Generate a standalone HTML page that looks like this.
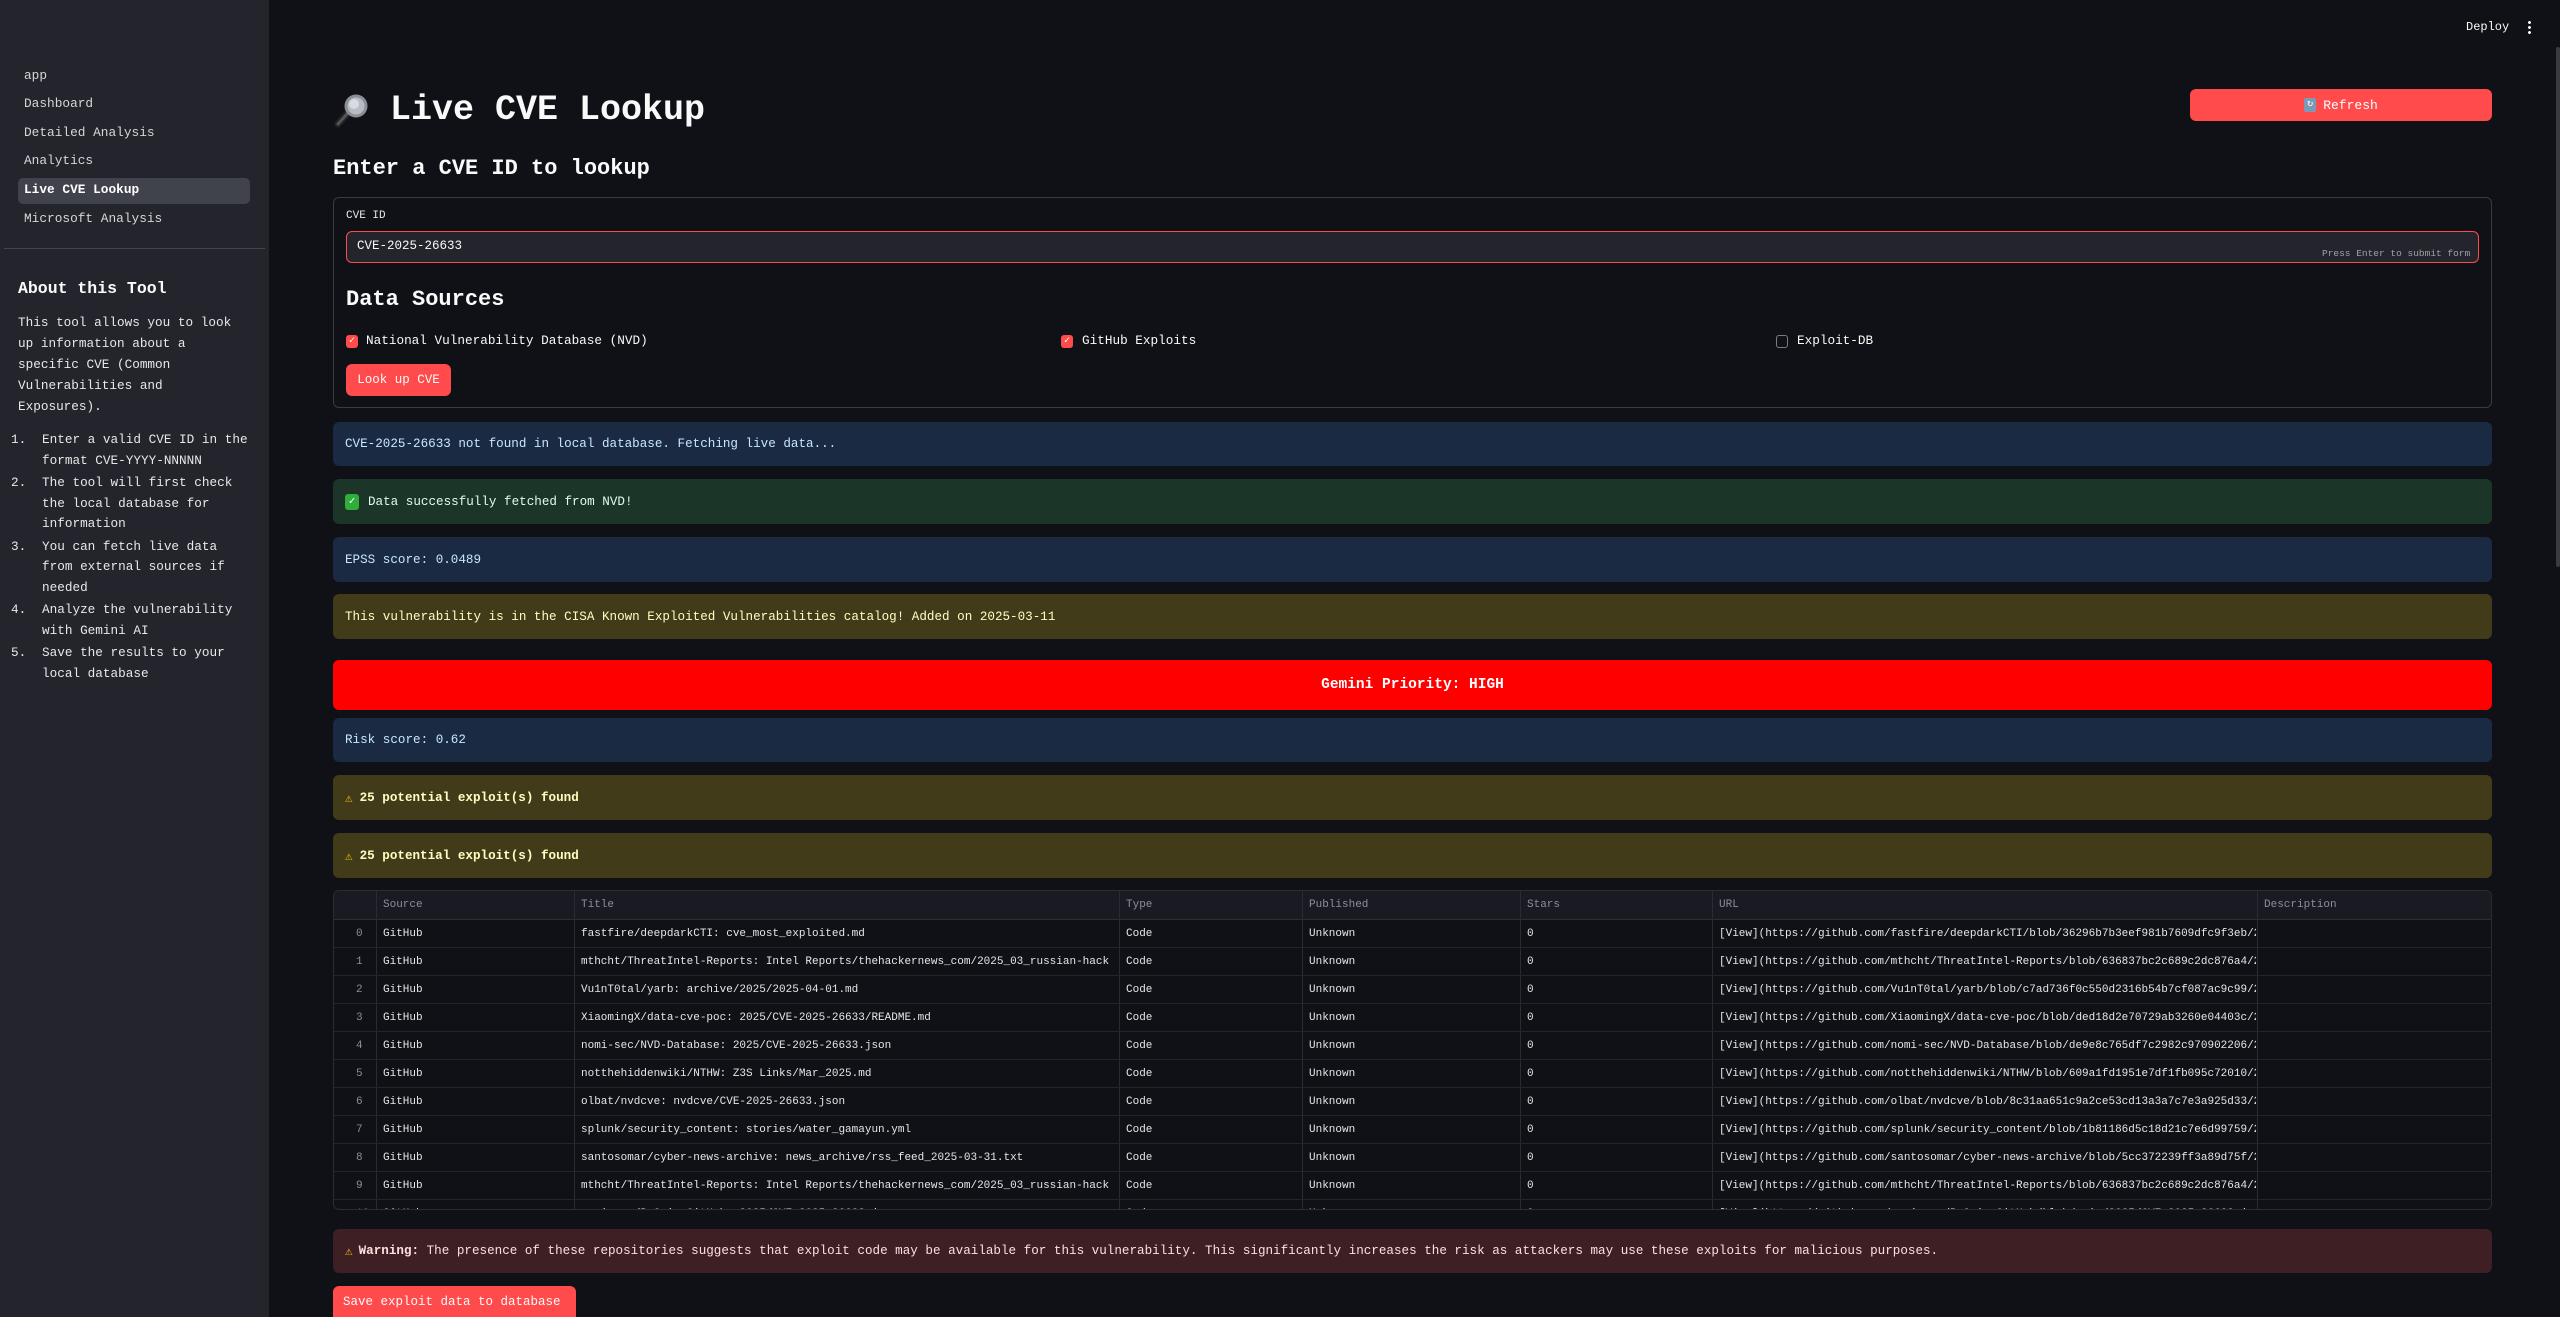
<!DOCTYPE html>
<html><head><meta charset="utf-8"><style>
*{box-sizing:border-box;margin:0;padding:0}
html,body{width:2560px;height:1317px;overflow:hidden}
body{background:#0f1116;font-family:"Liberation Mono","DejaVu Sans Mono",monospace;color:#fafafa;position:relative}
.a{position:absolute;white-space:nowrap}
#sb{position:absolute;left:0;top:0;width:269px;height:1317px;background:#23242c}
.nav{position:absolute;left:24px;font-size:12.8px;color:#d5d6da;line-height:20px}
.box{position:absolute;left:333px;width:2159px;border-radius:6px;font-size:12.6px;padding-left:12px;display:flex;align-items:center}
.blue{background:#1a2a42;color:#c7e7ff}
.green{background:#1b3628;color:#dffde9}
.yel{background:#423b19;color:#ffffc2}
.th,.td{position:absolute;font-size:11px;white-space:nowrap;overflow:hidden}
.th{color:#8d8f98}
.td{color:#e6e6e6}
.cb{position:absolute;width:12px;height:13px;border-radius:3px}
.li{position:relative;padding-left:31px;margin-bottom:2px}
.li span{position:absolute;left:0;top:0}
</style></head><body>
<div id="sb"></div>
<div class="nav" style="top:66px">app</div>
<div class="nav" style="top:94px">Dashboard</div>
<div class="nav" style="top:123px">Detailed Analysis</div>
<div class="nav" style="top:151px">Analytics</div>
<div class="a" style="left:18px;top:178px;width:232px;height:26px;background:#41434c;border-radius:5px"></div>
<div class="nav" style="top:180px;color:#fff;font-weight:bold">Live CVE Lookup</div>
<div class="nav" style="top:209px">Microsoft Analysis</div>
<div class="a" style="left:4px;top:248px;width:261px;height:1px;background:#44454c"></div>
<div class="a" style="left:18px;top:279px;font-size:16.5px;font-weight:bold;color:#fafafa">About this Tool</div>
<div class="a" style="left:18px;top:312px;font-size:12.7px;line-height:21px;color:#e8e8ea;white-space:normal;width:240px">This tool allows you to look<br>up information about a<br>specific CVE (Common<br>Vulnerabilities and<br>Exposures).</div>
<div class="a" style="left:11px;top:430px;font-size:12.7px;color:#e8e8ea;line-height:20.5px">
<div class="li"><span>1.</span>Enter a valid CVE ID in the<br>format CVE-YYYY-NNNNN</div>
<div class="li"><span>2.</span>The tool will first check<br>the local database for<br>information</div>
<div class="li"><span>3.</span>You can fetch live data<br>from external sources if<br>needed</div>
<div class="li"><span>4.</span>Analyze the vulnerability<br>with Gemini AI</div>
<div class="li"><span>5.</span>Save the results to your<br>local database</div>
</div>
<!-- top bar -->
<div class="a" style="left:2466px;top:20px;font-size:12px;color:#fafafa">Deploy</div>
<div class="a" style="left:2528px;top:20px;width:3px;height:14px;background:radial-gradient(circle,#fff 1.3px,transparent 1.6px) 0 0/3px 5px"></div>
<div class="a" style="left:2556px;top:47px;width:4px;height:520px;background:#3a3b40;border-radius:2px"></div>
<!-- title -->
<svg class="a" style="left:332px;top:93px" width="38" height="36" viewBox="0 0 38 36"><line x1="6" y1="31" x2="15" y2="21" stroke="#222" stroke-width="7" stroke-linecap="round"/><line x1="6" y1="31" x2="15" y2="21" stroke="#555" stroke-width="3" stroke-linecap="round"/><circle cx="24" cy="13" r="10" fill="#b8bcc2" stroke="#8a8f97" stroke-width="3"/><circle cx="22" cy="11" r="5" fill="#d8dbe0"/></svg>
<div class="a" style="left:390px;top:90px;font-size:35px;font-weight:bold;color:#fafafa">Live CVE Lookup</div>
<div class="a" style="left:2190px;top:89px;width:302px;height:32px;background:#ff4b4b;border-radius:6px;display:flex;align-items:center;justify-content:center;font-size:13px;color:#fff"><span style="display:inline-block;width:12px;height:14px;background:#7a9ab8;border-radius:2px;margin-right:7px;color:#fff;font-size:10px;line-height:14px;text-align:center">↻</span>Refresh</div>
<div class="a" style="left:333px;top:156px;font-size:22px;font-weight:bold">Enter a CVE ID to lookup</div>
<!-- form -->
<div class="a" style="left:333px;top:197px;width:2159px;height:211px;border:1px solid #3a3b42;border-radius:6px"></div>
<div class="a" style="left:346px;top:210px;font-size:11px;color:#e8e8ea">CVE ID</div>
<div class="a" style="left:346px;top:231px;width:2133px;height:32px;background:#23242c;border:1px solid #ff4b4b;border-radius:6px"></div>
<div class="a" style="left:357px;top:239px;font-size:12.5px;color:#fafafa">CVE-2025-26633</div>
<div class="a" style="left:2322px;top:248px;font-size:9.5px;color:#a0a2a8">Press Enter to submit form</div>
<div class="a" style="left:346px;top:287px;font-size:22px;font-weight:bold">Data Sources</div>
<div class="cb" style="left:346px;top:335px;background:#ff4b4b;color:#fff;font-size:10px;line-height:13px;text-align:center">✓</div>
<div class="a" style="left:366px;top:333px;font-size:12.7px">National Vulnerability Database (NVD)</div>
<div class="cb" style="left:1061px;top:335px;background:#ff4b4b;color:#fff;font-size:10px;line-height:13px;text-align:center">✓</div>
<div class="a" style="left:1082px;top:333px;font-size:12.7px">GitHub Exploits</div>
<div class="cb" style="left:1776px;top:335px;border:1px solid #7a7b82"></div>
<div class="a" style="left:1797px;top:333px;font-size:12.7px">Exploit-DB</div>
<div class="a" style="left:346px;top:364px;width:105px;height:32px;background:#ff4b4b;border-radius:6px;font-size:12.5px;display:flex;align-items:center;justify-content:center">Look up CVE</div>
<!-- alerts -->
<div class="box blue" style="top:422px;height:44px">CVE-2025-26633 not found in local database. Fetching live data...</div>
<div class="box green" style="top:479px;height:45px"><span style="display:inline-block;width:14px;height:16px;background:#2fae3c;border-radius:3px;color:#fff;font-size:11px;line-height:16px;text-align:center;margin-right:9px">✓</span>Data successfully fetched from NVD!</div>
<div class="box blue" style="top:537px;height:45px">EPSS score: 0.0489</div>
<div class="box yel" style="top:594px;height:45px">This vulnerability is in the CISA Known Exploited Vulnerabilities catalog! Added on 2025-03-11</div>
<div class="box" style="top:660px;height:50px;background:#ff0000;justify-content:center;padding:0;font-weight:bold;font-size:14.5px;color:#fff">Gemini Priority: HIGH</div>
<div class="box blue" style="top:718px;height:44px">Risk score: 0.62</div>
<div class="box yel" style="top:775px;height:45px;font-weight:bold"><span style="color:#f5c518;margin-right:7px">⚠</span>25 potential exploit(s) found</div>
<div class="box yel" style="top:833px;height:45px;font-weight:bold"><span style="color:#f5c518;margin-right:7px">⚠</span>25 potential exploit(s) found</div>
<!-- table -->
<div class="a" style="left:333px;top:890px;width:2159px;height:320px;border:1px solid #2a2b33;border-radius:6px;overflow:hidden">
<div class="a" style="left:0;top:0;width:2159px;height:29px;background:#1a1b22;border-bottom:1px solid #2d2e36"></div>
<div id="rows"></div>
</div>
<div class="box" style="top:1229px;height:44px;background:#3e2024;color:#ffdede"><span style="color:#f5c518;margin-right:6px">⚠</span><b>Warning:</b>&nbsp;The presence of these repositories suggests that exploit code may be available for this vulnerability. This significantly increases the risk as attackers may use these exploits for malicious purposes.</div>
<div class="a" style="left:333px;top:1286px;width:243px;height:40px;background:#ff4b4b;border-radius:6px;font-size:12.5px;padding:9px 0 0 10px">Save exploit data to database</div>
<script>
var cols=[333,375,573,1118,1301,1519,1711,2256];
var h=['','Source','Title','Type','Published','Stars','URL','Description'];
var T=["fastfire/deepdarkCTI: cve_most_exploited.md","mthcht/ThreatIntel-Reports: Intel Reports/thehackernews_com/2025_03_russian-hack","Vu1nT0tal/yarb: archive/2025/2025-04-01.md","XiaomingX/data-cve-poc: 2025/CVE-2025-26633/README.md","nomi-sec/NVD-Database: 2025/CVE-2025-26633.json","notthehiddenwiki/NTHW: Z3S Links/Mar_2025.md","olbat/nvdcve: nvdcve/CVE-2025-26633.json","splunk/security_content: stories/water_gamayun.yml","santosomar/cyber-news-archive: news_archive/rss_feed_2025-03-31.txt","mthcht/ThreatIntel-Reports: Intel Reports/thehackernews_com/2025_03_russian-hack","nomi-sec/PoC-in-GitHub: 2025/CVE-2025-26633.json"];
var U=["fastfire/deepdarkCTI/blob/36296b7b3eef981b7609dfc9f3eb","mthcht/ThreatIntel-Reports/blob/636837bc2c689c2dc876a4","Vu1nT0tal/yarb/blob/c7ad736f0c550d2316b54b7cf087ac9c99","XiaomingX/data-cve-poc/blob/ded18d2e70729ab3260e04403c","nomi-sec/NVD-Database/blob/de9e8c765df7c2982c970902206","notthehiddenwiki/NTHW/blob/609a1fd1951e7df1fb095c72010","olbat/nvdcve/blob/8c31aa651c9a2ce53cd13a3a7c7e3a925d33","splunk/security_content/blob/1b81186d5c18d21c7e6d99759","santosomar/cyber-news-archive/blob/5cc372239ff3a89d75f","mthcht/ThreatIntel-Reports/blob/636837bc2c689c2dc876a4","nomi-sec/PoC-in-GitHub/blob/main/2025/CVE-2025-26633.js"];
var s='';
for(var i=1;i<8;i++){s+='<div class="th" style="left:'+(cols[i]-333+7)+'px;top:8px">'+h[i]+'</div>';}
for(var i=1;i<8;i++){s+='<div class="a" style="left:'+(cols[i]-333)+'px;top:0;width:1px;height:320px;background:#2a2b33"></div>';}
for(var r=0;r<11;r++){var y=29+r*28;
s+='<div class="a" style="left:0;top:'+(y+27)+'px;width:2159px;height:1px;background:#24252c"></div>';
var v=['<span style="color:#8d8f98">'+r+'</span>','GitHub',T[r],'Code','Unknown','0','[View](https://github.com/'+U[r]+'/2025',''];
for(var c=0;c<8;c++){var l=c==0?22:cols[c]-333+7;var w=c==0?20:(cols[c+1]||2492)-cols[c]-8;
s+='<div class="td" style="left:'+l+'px;top:'+(y+8)+'px;width:'+w+'px">'+v[c]+'</div>';}}
document.getElementById('rows').innerHTML=s;
</script>
</body></html>
